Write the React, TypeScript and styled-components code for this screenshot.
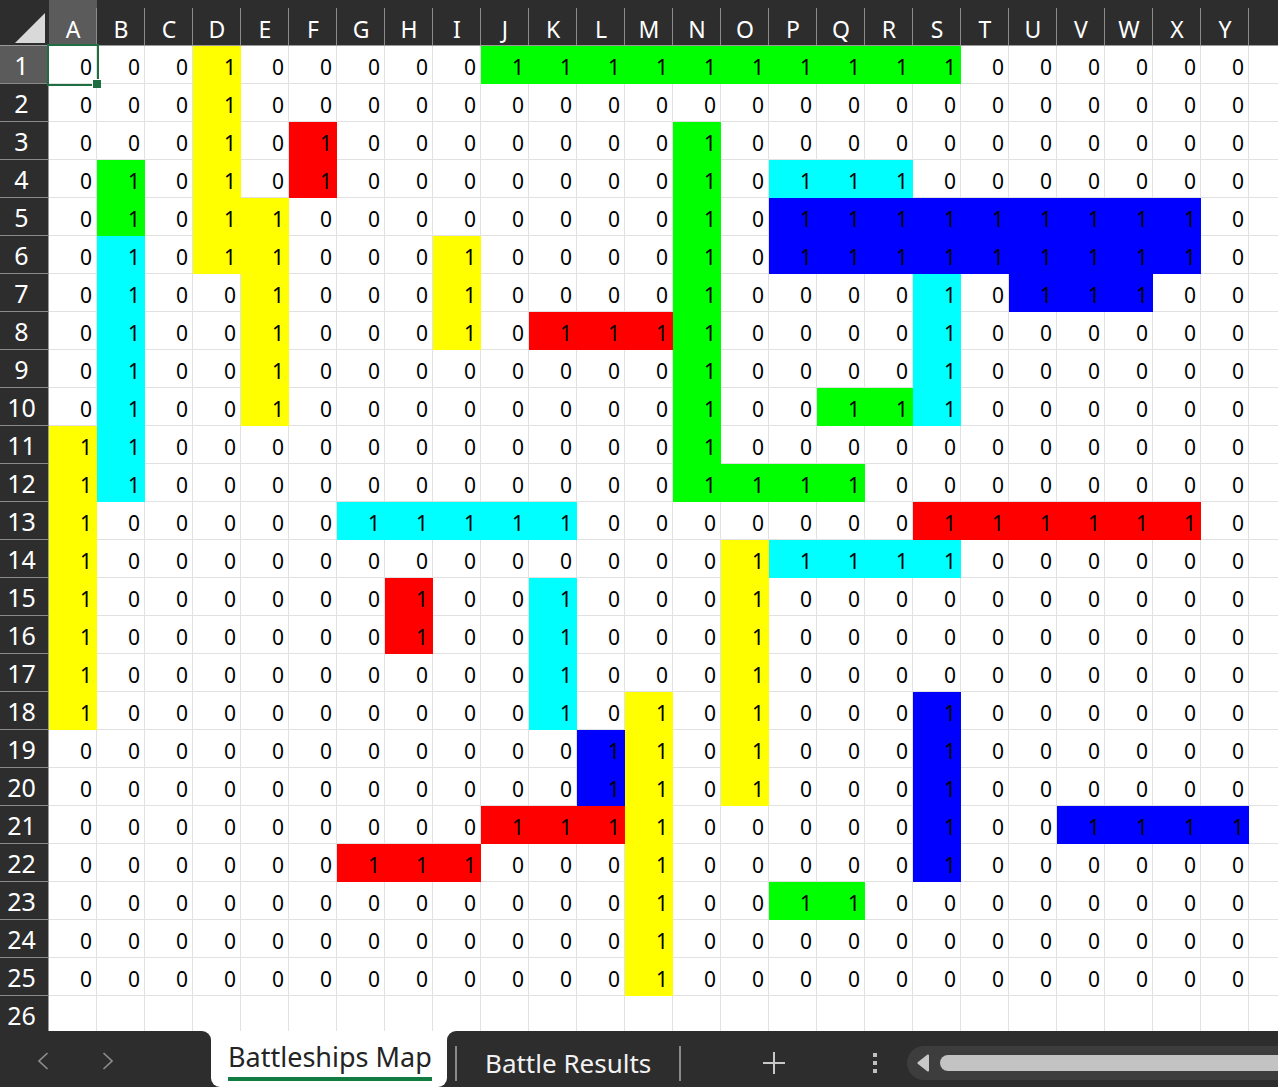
import styled, { createGlobalStyle, css } from "styled-components";

const GlobalStyle = createGlobalStyle`
  html, body {
    margin: 0;
    padding: 0;
    background: #ffffff;
    overflow: hidden;
  }
  * {
    box-sizing: border-box;
  }
`;

const COLS = "ABCDEFGHIJKLMNOPQRSTUVWXY".split("");
const DATA_ROWS = 25;
const ROW_COUNT = 26;

const FILLS = {
  y: "#ffff00",
  g: "#00ff00",
  c: "#00ffff",
  b: "#0000ff",
  r: "#ff0000",
};
type Fill = keyof typeof FILLS;

// each ship is a filled block of 1s
const SHIPS: [string, Fill][] = [
  ["D1:D6", "y"],
  ["E5:E10", "y"],
  ["I6:I8", "y"],
  ["A11:A18", "y"],
  ["O14:O20", "y"],
  ["M18:M25", "y"],
  ["J1:S1", "g"],
  ["B4:B5", "g"],
  ["N3:N12", "g"],
  ["O12:Q12", "g"],
  ["Q10:R10", "g"],
  ["P23:Q23", "g"],
  ["F3:F4", "r"],
  ["K8:M8", "r"],
  ["S13:X13", "r"],
  ["H15:H16", "r"],
  ["J21:L21", "r"],
  ["G22:I22", "r"],
  ["P4:R4", "c"],
  ["B6:B12", "c"],
  ["S7:S10", "c"],
  ["G13:K13", "c"],
  ["P14:S14", "c"],
  ["K15:K18", "c"],
  ["P5:X6", "b"],
  ["U7:W7", "b"],
  ["S18:S22", "b"],
  ["L19:L20", "b"],
  ["V21:Y21", "b"],
];

const parseRef = (ref: string) => ({
  col: COLS.indexOf(ref[0]),
  row: parseInt(ref.slice(1), 10) - 1,
});

const buildMap = () => {
  const map: (Fill | null)[][] = Array.from({ length: DATA_ROWS }, () =>
    Array(COLS.length).fill(null)
  );
  SHIPS.forEach(([range, fill]) => {
    const [from, to] = range.split(":").map(parseRef);
    for (let r = from.row; r <= to.row; r++) {
      for (let c = from.col; c <= to.col; c++) map[r][c] = fill;
    }
  });
  return map;
};

const MAP = buildMap();

const Screen = styled.div`
  width: 100vw;
  height: 100vh;
  display: flex;
  flex-direction: column;
  overflow: hidden;
`;

const Sheet = styled.div`
  flex: 1;
  min-height: 0;
  overflow: hidden;
  display: flex;
  flex-direction: column;
`;

const HeaderRow = styled.div`
  display: flex;
  height: 46px;
  flex-shrink: 0;
  background: #2d2d2d;
  border-bottom: 1px solid #9a9a9a;
`;

const Corner = styled.div`
  width: 49px;
  height: 100%;
  display: flex;

  svg {
    display: block;
  }
`;

const ColHeader = styled.div<{ $selected?: boolean }>`
  width: 48px;
  height: 100%;
  display: flex;
  justify-content: center;
  padding-top: 13px;
  font-family: "Noto Sans", "Open Sans", sans-serif;
  font-size: 23px;
  line-height: normal;
  color: #ffffff;
  background-color: ${({ $selected }) => ($selected ? "#5b5b5b" : "transparent")};
  background-image: linear-gradient(to left, #8c8c8c 1px, transparent 1px);
  background-size: 100% 37px;
  background-position: bottom;
  background-repeat: no-repeat;
`;

const HeaderFill = styled.div`
  flex: 1;
`;

const Row = styled.div`
  display: flex;
  height: 38px;
  flex-shrink: 0;
`;

const RowHeader = styled.div<{ $selected?: boolean }>`
  width: 49px;
  height: 100%;
  display: flex;
  align-items: center;
  justify-content: center;
  padding-right: 5px;
  font-family: "Noto Sans", "Open Sans", sans-serif;
  font-size: 25px;
  color: #ffffff;
  background: ${({ $selected }) => ($selected ? "#5b5b5b" : "#2d2d2d")};
  border-bottom: 1px solid #8a8a8a;
  border-right: 1px solid #9a9a9a;
`;

const Cell = styled.div<{ $fill?: string; $active?: boolean }>`
  position: relative;
  width: 48px;
  height: 100%;
  display: flex;
  justify-content: flex-end;
  align-items: flex-start;
  padding: 7px 4px 0 0;
  font-family: "Noto Sans", "Open Sans", sans-serif;
  font-size: 21px;
  line-height: normal;
  color: #000000;
  background: ${({ $fill }) => $fill || "#ffffff"};
  border-right: 1px solid ${({ $fill }) => $fill || "#e1e1e1"};
  border-bottom: 1px solid ${({ $fill }) => $fill || "#e1e1e1"};

  ${({ $active }) =>
    $active &&
    css`
      z-index: 2;
      outline: 2px solid #1e6e42;
      outline-offset: 0;

      &::after {
        content: "";
        position: absolute;
        right: -5px;
        bottom: -5px;
        width: 8px;
        height: 8px;
        background: #1e6e42;
        border-top: 1px solid #ffffff;
        border-left: 1px solid #ffffff;
      }
    `}
`;

const FillerCell = styled.div`
  flex: 1;
  height: 100%;
  border-bottom: 1px solid #e1e1e1;
`;

const TabBar = styled.div`
  height: 56px;
  flex-shrink: 0;
  display: flex;
  background: #ffffff;
`;

const NavArea = styled.div`
  width: 211px;
  display: flex;
  align-items: center;
  padding: 4px 0 0 37px;
  gap: 53px;
  background: #2d2d2d;
  border-top-right-radius: 9px;
`;

const ActiveTabWrap = styled.div`
  width: 236px;
  display: flex;
  background: linear-gradient(#ffffff 50%, #2d2d2d 50%);
`;

const ActiveTab = styled.div`
  flex: 1;
  padding: 7px 0 0 17px;
  background: #ffffff;
  border-radius: 0 0 9px 9px;
`;

const ActiveLabel = styled.span`
  display: inline-block;
  font-family: "Noto Sans", "Open Sans", sans-serif;
  font-size: 27px;
  line-height: normal;
  color: #242424;
  padding-bottom: 2px;
  border-bottom: 4px solid #107c41;
`;

const RightArea = styled.div`
  flex: 1;
  display: flex;
  align-items: center;
  padding: 8px 0 0 8px;
  background: #2d2d2d;
  border-top-left-radius: 9px;
`;

const TabDivider = styled.div<{ $gap?: number }>`
  width: 2px;
  height: 35px;
  margin-left: ${({ $gap }) => $gap || 0}px;
  background: #8a8a8a;
`;

const TabLabel = styled.span`
  margin-left: 28px;
  font-family: "Noto Sans", "Open Sans", sans-serif;
  font-size: 26px;
  line-height: normal;
  color: #f2f2f2;
`;

const IconSlot = styled.div<{ $gap: number }>`
  display: flex;
  margin-left: ${({ $gap }) => $gap}px;

  svg {
    display: block;
  }
`;

const ScrollTrack = styled.div`
  flex: 1;
  height: 34px;
  margin-left: 30px;
  display: flex;
  align-items: center;
  padding-left: 10px;
  gap: 10px;
  background: #3d3d3d;
  border-radius: 17px 0 0 17px;
`;

const ScrollThumb = styled.div`
  flex: 1;
  height: 16px;
  background: #c3c3c3;
  border-radius: 8px 0 0 8px;
`;

const Chevron = ({ dir }: { dir: "left" | "right" }) => (
  <svg width="12" height="18" viewBox="0 0 12 18">
    <polyline
      points={dir === "left" ? "10.5,1 2,9 10.5,17" : "1.5,1 10,9 1.5,17"}
      fill="none"
      stroke="#8c8c8c"
      strokeWidth="1.7"
    />
  </svg>
);

const App = () => {
  return (
    <Screen>
      <GlobalStyle />
      <Sheet>
        <HeaderRow>
          <Corner>
            <svg width="48" height="45" viewBox="0 0 48 45">
              <polygon points="15,43 45,13 45,43" fill="#d9d9d9" />
            </svg>
          </Corner>
          {COLS.map((c, i) => (
            <ColHeader key={c} $selected={i === 0}>
              {c}
            </ColHeader>
          ))}
          <HeaderFill />
        </HeaderRow>

        {Array.from({ length: ROW_COUNT }, (_, r) => (
          <Row key={r}>
            <RowHeader $selected={r === 0}>{r + 1}</RowHeader>
            {COLS.map((c, ci) => {
              const fill = r < DATA_ROWS ? MAP[r][ci] : null;
              return (
                <Cell
                  key={c}
                  $fill={fill ? FILLS[fill] : undefined}
                  $active={r === 0 && ci === 0}
                >
                  {r < DATA_ROWS ? (fill ? 1 : 0) : ""}
                </Cell>
              );
            })}
            <FillerCell />
          </Row>
        ))}
      </Sheet>

      <TabBar>
        <NavArea>
          <Chevron dir="left" />
          <Chevron dir="right" />
        </NavArea>
        <ActiveTabWrap>
          <ActiveTab>
            <ActiveLabel>Battleships Map</ActiveLabel>
          </ActiveTab>
        </ActiveTabWrap>
        <RightArea>
          <TabDivider />
          <TabLabel>Battle Results</TabLabel>
          <TabDivider $gap={28} />
          <IconSlot $gap={82}>
            <svg width="22" height="22" viewBox="0 0 22 22">
              <path d="M11 0v22M0 11h22" stroke="#c8c8c8" strokeWidth="2" />
            </svg>
          </IconSlot>
          <IconSlot $gap={88}>
            <svg width="4" height="20" viewBox="0 0 4 20">
              <rect x="0" y="0" width="4" height="4" fill="#c0c0c0" />
              <rect x="0" y="8" width="4" height="4" fill="#c0c0c0" />
              <rect x="0" y="16" width="4" height="4" fill="#c0c0c0" />
            </svg>
          </IconSlot>
          <ScrollTrack>
            <svg width="13" height="18" viewBox="0 0 13 18">
              <path
                d="M12 1.5v15c0 1-1 1.4-1.8 .8L1 10c-.8-.5-.8-1.5 0-2l9.2-7.3C11 .1 12 .5 12 1.5z"
                fill="#c8c8c8"
              />
            </svg>
            <ScrollThumb />
          </ScrollTrack>
        </RightArea>
      </TabBar>
    </Screen>
  );
};

export default App;
